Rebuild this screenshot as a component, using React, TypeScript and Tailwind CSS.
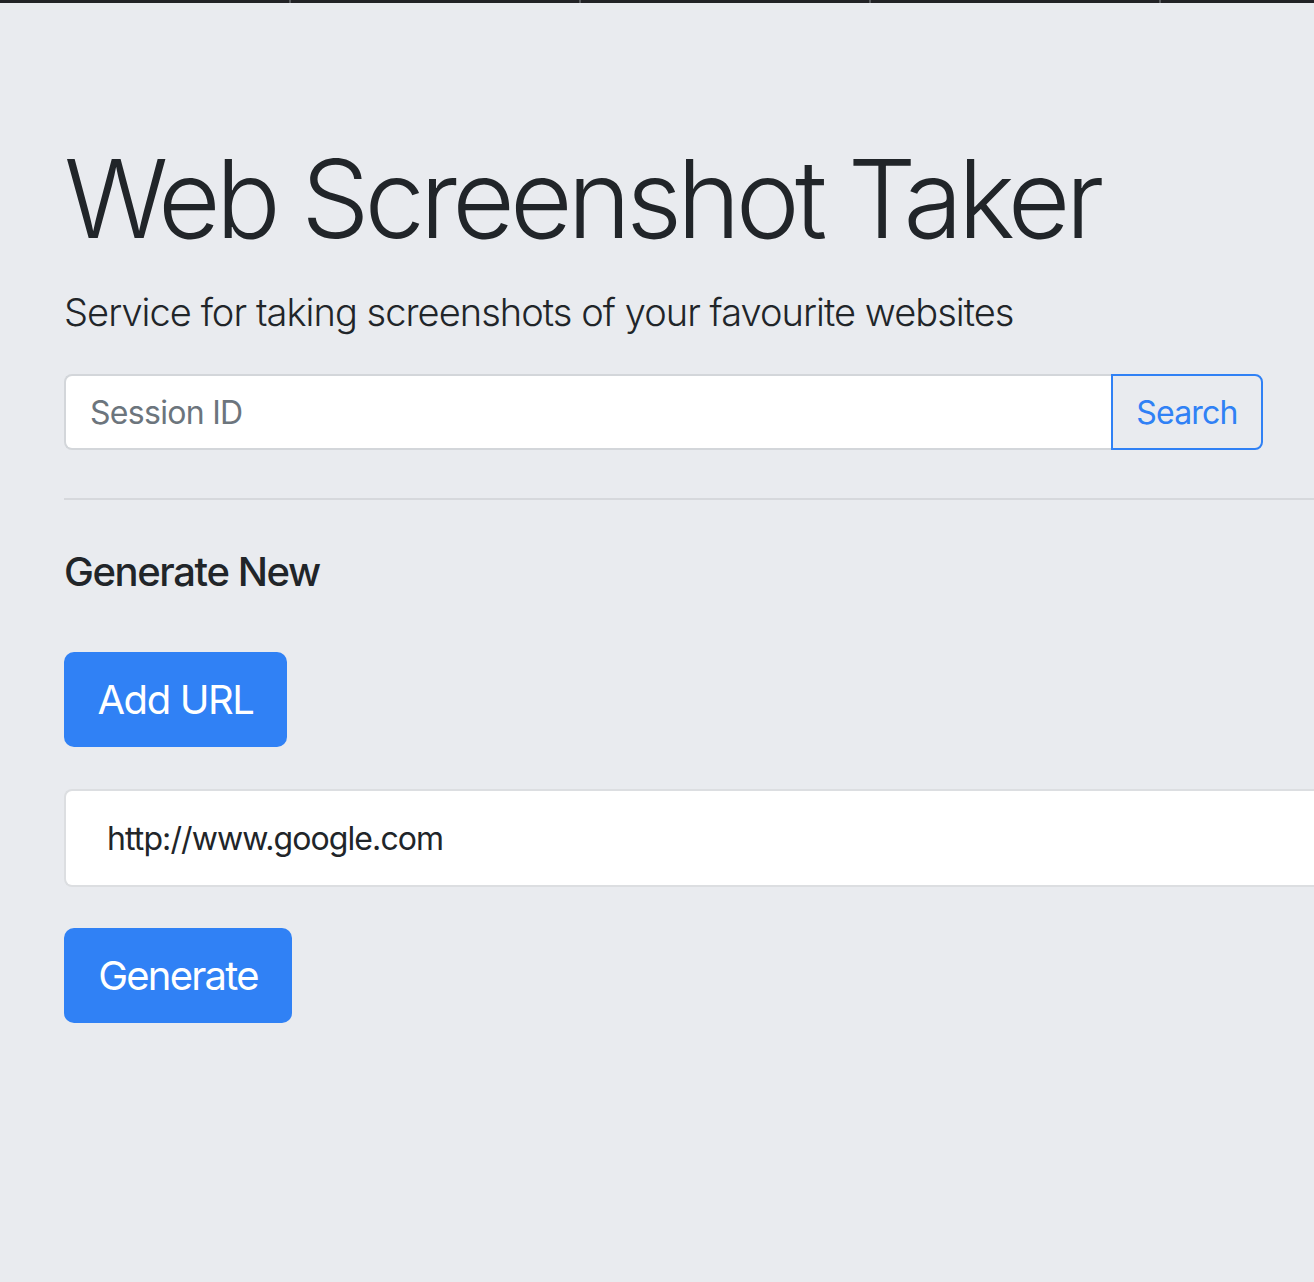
export default function App() {
  return (
    <div className="min-h-[1282px] w-full overflow-hidden bg-[#e9ebef] font-['Inter','Liberation_Sans',sans-serif] text-[#212529]">
      {/* window chrome strip */}
      <div className="flex h-[3px] bg-[#222326]">
        <div className="w-[289px]" />
        <div className="w-[2px] bg-[#55575b]" />
        <div className="w-[288px]" />
        <div className="w-[2px] bg-[#55575b]" />
        <div className="w-[288px]" />
        <div className="w-[2px] bg-[#55575b]" />
        <div className="w-[288px]" />
        <div className="w-[2px] bg-[#55575b]" />
      </div>

      <div className="pl-[64px] pt-[131px]">
        <h1 className="whitespace-nowrap text-[108px] font-light leading-[1.2] tracking-[-4.9px]">Web Screenshot Taker</h1>
        <p className="mt-[20px] whitespace-nowrap text-[38px] font-light leading-[1.5] tracking-[-0.95px]">
          Service for taking screenshots of your favourite websites
        </p>

        <div className="mt-[33px] flex h-[76px] w-[1199px]">
          <input
            className="h-full flex-1 rounded-l-[8px] border-2 border-r-0 border-[#d3d6da] bg-white px-[24px] pt-[2px] text-[32px] tracking-[-0.7px] text-[#212529] outline-none placeholder:text-[#6c757d]"
            placeholder="Session ID"
          />
          <button className="h-full w-[152px] rounded-r-[8px] border-2 border-[#3081f5] pt-[2px] text-[32px] tracking-[-0.8px] text-[#3081f5]">
            Search
          </button>
        </div>

        <div className="mt-[48px] h-[2px] bg-[#d6d8dc]" />

        <h5 className="mt-[48px] text-[40px] font-medium leading-[1.2] tracking-[-1.4px]">Generate New</h5>

        <button className="mt-[56px] flex h-[95px] w-[223px] items-center justify-center rounded-[10px] bg-[#3081f5] pt-[2px] text-[40px] tracking-[-1.4px] text-white">
          Add URL
        </button>

        <div className="mt-[42px] flex h-[98px] items-center rounded-l-[8px] border-2 border-r-0 border-[#dcdee1] bg-white pl-[41px] pt-[3px] text-[32px] tracking-[-0.9px]">
          http://www.google.com
        </div>

        <button className="mt-[41px] flex h-[95px] w-[228px] items-center justify-center rounded-[10px] bg-[#3081f5] pt-[2px] text-[40px] tracking-[-1.75px] text-white">
          Generate
        </button>
      </div>
    </div>
  );
}
